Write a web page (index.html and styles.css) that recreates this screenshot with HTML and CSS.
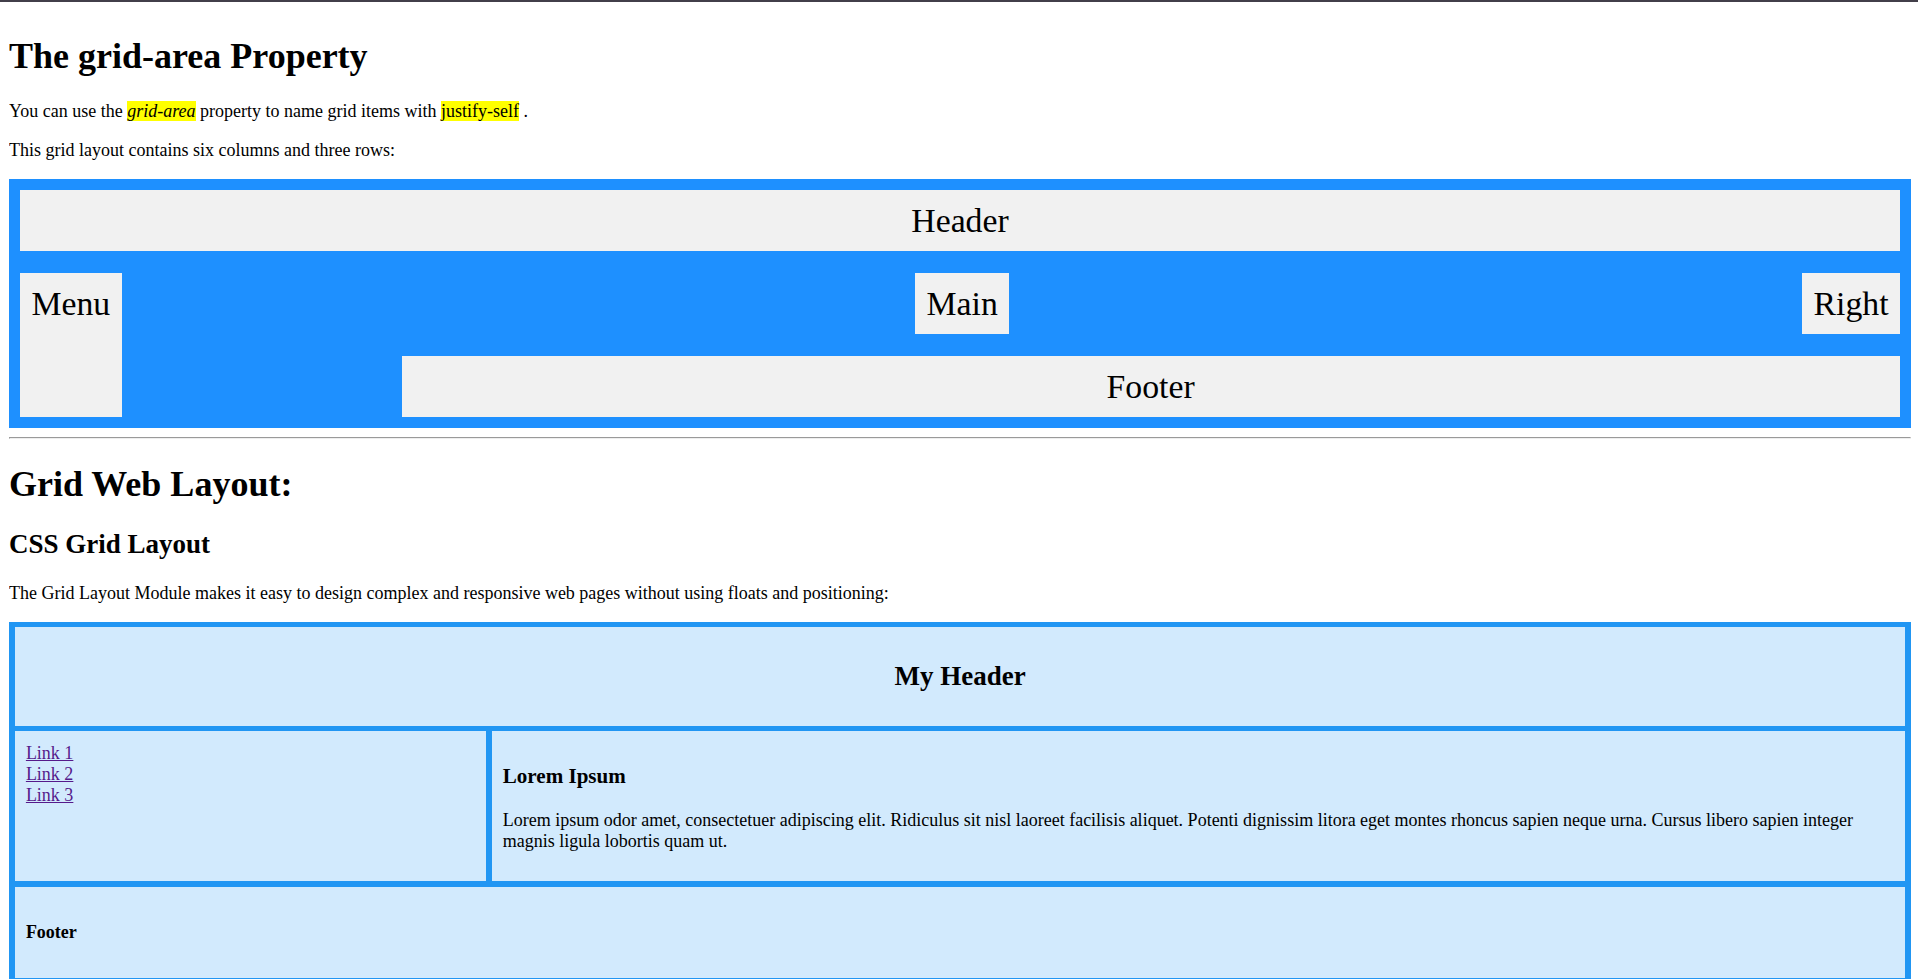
FILE: index.html
```html
<!DOCTYPE html>
<html lang="en" class="root">
<head>
<meta charset="utf-8">
<title>The grid-area Property</title>
<link rel="stylesheet" href="styles.css">
</head>
<body class="page">
<h1>The grid-area Property</h1>
<p>You can use the <mark><em>grid-area</em></mark> property to name grid items with <mark>justify-self</mark> .</p>
<p>This grid layout contains six columns and three rows:</p>

<div class="demo-grid">
  <div class="demo-header">Header</div>
  <div class="demo-menu">Menu</div>
  <div class="demo-main">Main</div>
  <div class="demo-right">Right</div>
  <div class="demo-footer">Footer</div>
</div>

<hr>

<h1>Grid Web Layout:</h1>
<h2>CSS Grid Layout</h2>
<p>The Grid Layout Module makes it easy to design complex and responsive web pages without using floats and positioning:</p>

<div class="web-grid">
  <div class="web-header">
    <h2>My Header</h2>
  </div>
  <div class="web-menu">
    <a href="#" class="web-link">Link 1</a><br>
    <a href="#" class="web-link">Link 2</a><br>
    <a href="#" class="web-link">Link 3</a>
  </div>
  <div class="web-main">
    <h3>Lorem Ipsum</h3>
    <p>Lorem ipsum odor amet, consectetuer adipiscing elit. Ridiculus sit nisl laoreet facilisis aliquet. Potenti dignissim litora eget montes rhoncus sapien neque urna. Cursus libero sapien integer magnis ligula lobortis quam ut.</p>
  </div>
  <div class="web-footer">
    <h4>Footer</h4>
  </div>
</div>
</body>
</html>
```

FILE: styles.css
```css
.root {
  border-top: 2px solid #423f4a;
}

.page {
  zoom: 1.125;
  margin: 8px 6.22px 8px 8px;
  font-family: "Liberation Serif", "Times New Roman", serif;
  color: #000;
  background: #fff;
}

mark {
  background: #ffff00;
  color: #000;
}

/* First demo grid */
.demo-grid {
  display: grid;
  grid-template-columns: repeat(4, 2.162fr) repeat(2, 1fr);
  grid-template-areas:
    "header header header header header header"
    "menu main main main right right"
    "menu footer footer footer footer footer";
  gap: 20px;
  padding: 10px;
  background-color: #1e90ff;
}

.demo-grid > div {
  background-color: #f1f1f1;
  padding: 10px;
  font-size: 30px;
  text-align: center;
}

.demo-header { grid-area: header; }
.demo-menu { grid-area: menu; justify-self: start; }
.demo-main { grid-area: main; justify-self: center; }
.demo-right { grid-area: right; justify-self: end; }
.demo-footer { grid-area: footer; }

/* Web layout grid */
.web-grid {
  display: grid;
  grid-template-columns: 1fr 3fr;
  grid-template-areas:
    "header header"
    "menu main"
    "footer footer";
  gap: 5px;
  padding: 5px;
  background-color: #2196f3;
}

.web-grid > div {
  background-color: rgba(255, 255, 255, 0.8);
  padding: 10px;
}

.web-header { grid-area: header; text-align: center; }
.web-menu { grid-area: menu; }
.web-main { grid-area: main; }
.web-footer { grid-area: footer; }

.web-link {
  color: #551a8b;
}
```
